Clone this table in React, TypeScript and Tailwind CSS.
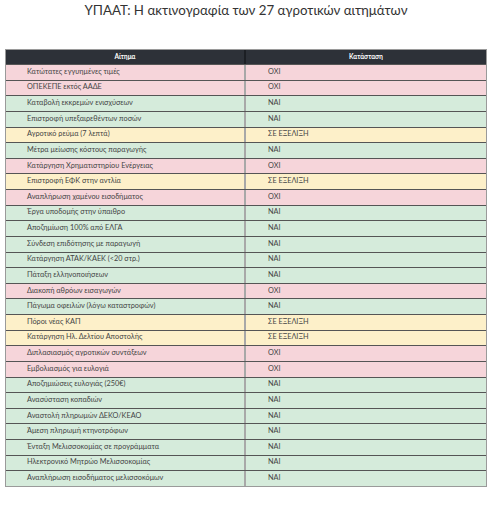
import React from 'react';

type Status = 'ΟΧΙ' | 'ΝΑΙ' | 'ΣΕ ΕΞΕΛΙΞΗ';

const rows: [string, Status][] = [
  ['Κατώτατες εγγυημένες τιμές', 'ΟΧΙ'],
  ['ΟΠΕΚΕΠΕ εκτός ΑΑΔΕ', 'ΟΧΙ'],
  ['Καταβολή εκκρεμών ενισχύσεων', 'ΝΑΙ'],
  ['Επιστροφή υπεξαιρεθέντων ποσών', 'ΝΑΙ'],
  ['Αγροτικό ρεύμα (7 λεπτά)', 'ΣΕ ΕΞΕΛΙΞΗ'],
  ['Μέτρα μείωσης κόστους παραγωγής', 'ΝΑΙ'],
  ['Κατάργηση Χρηματιστηρίου Ενέργειας', 'ΟΧΙ'],
  ['Επιστροφή ΕΦΚ στην αντλία', 'ΣΕ ΕΞΕΛΙΞΗ'],
  ['Αναπλήρωση χαμένου εισοδήματος', 'ΟΧΙ'],
  ['Έργα υποδομής στην ύπαιθρο', 'ΝΑΙ'],
  ['Αποζημίωση 100% από ΕΛΓΑ', 'ΝΑΙ'],
  ['Σύνδεση επιδότησης με παραγωγή', 'ΝΑΙ'],
  ['Κατάργηση ΑΤΑΚ/ΚΑΕΚ (<20 στρ.)', 'ΝΑΙ'],
  ['Πάταξη ελληνοποιήσεων', 'ΝΑΙ'],
  ['Διακοπή αθρόων εισαγωγών', 'ΟΧΙ'],
  ['Πάγωμα οφειλών (λόγω καταστροφών)', 'ΝΑΙ'],
  ['Πόροι νέας ΚΑΠ', 'ΣΕ ΕΞΕΛΙΞΗ'],
  ['Κατάργηση Ηλ. Δελτίου Αποστολής', 'ΣΕ ΕΞΕΛΙΞΗ'],
  ['Διπλασιασμός αγροτικών συντάξεων', 'ΟΧΙ'],
  ['Εμβολιασμός για ευλογιά', 'ΟΧΙ'],
  ['Αποζημιώσεις ευλογιάς (250€)', 'ΝΑΙ'],
  ['Ανασύσταση κοπαδιών', 'ΝΑΙ'],
  ['Αναστολή πληρωμών ΔΕΚΟ/ΚΕΑΟ', 'ΝΑΙ'],
  ['Άμεση πληρωμή κτηνοτρόφων', 'ΝΑΙ'],
  ['Ένταξη Μελισσοκομίας σε προγράμματα', 'ΝΑΙ'],
  ['Ηλεκτρονικό Μητρώο Μελισσοκομίας', 'ΝΑΙ'],
  ['Αναπλήρωση εισοδήματος μελισσοκόμων', 'ΝΑΙ'],
];

const rowBg: Record<Status, string> = {
  'ΟΧΙ': 'bg-[#f6d5da]',
  'ΝΑΙ': 'bg-[#d5ebdb]',
  'ΣΕ ΕΞΕΛΙΞΗ': 'bg-[#fdf0c9]',
};

export default function App() {
  return (
    <div className="w-[492px] h-[512px] bg-white font-['Lato',sans-serif] text-[#444]">
      <h1 className="pt-[2px] text-center text-[13.3px] leading-[17px] text-[#333] font-normal">
        ΥΠΑΑΤ: Η ακτινογραφία των 27 αγροτικών αιτημάτων
      </h1>

      <div className="mt-[30px] mx-[5px] w-[482px] border border-[#9a9a9a]">
        <div className="grid grid-cols-[240px_1fr] h-[14px] bg-[#2d3138] text-white text-[6.5px] font-bold">
          <div className="flex items-center justify-center border-r-2 border-[#1c1f24]">Αίτημα</div>
          <div className="flex items-center justify-center">Κατάσταση</div>
        </div>
        {rows.map(([label, status]) => (
          <div
            key={label}
            className={`grid grid-cols-[240px_1fr] h-[15.63px] border-t border-[#555] text-[7.3px] ${rowBg[status]}`}
          >
            <div className="flex items-center pl-[21px] border-r-2 border-[#a8a8a8]">{label}</div>
            <div className="flex items-center pl-[22px]">{status}</div>
          </div>
        ))}
      </div>
    </div>
  );
}
